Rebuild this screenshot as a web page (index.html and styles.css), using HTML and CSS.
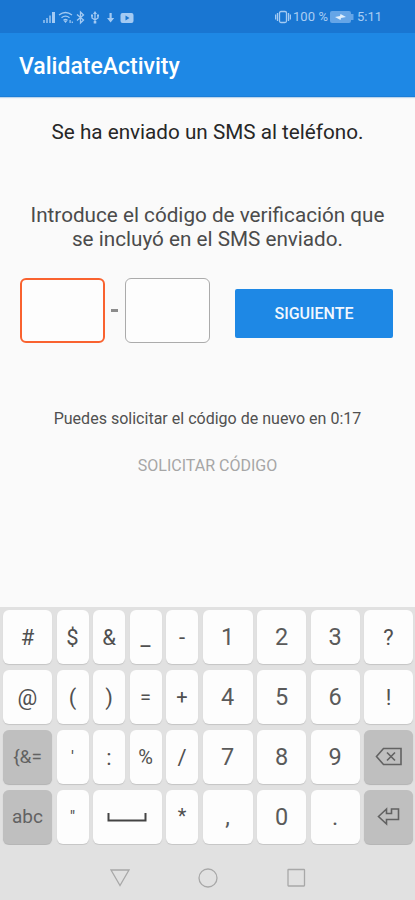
FILE: index.html
```html
<!DOCTYPE html>
<html lang="es">
<head>
<meta charset="utf-8">
<title>ValidateActivity</title>
<link rel="stylesheet" href="styles.css">
</head>
<body>
<div class="phone">
  <div class="status">
    <svg class="status-left" width="94" height="16" viewBox="0 0 94 16">
      <path class="fill dim" d="M0 11h2v3H0zM3 9h2v5H3zM6 6.500h2V14H6z"/>
      <path class="fill" d="M9 3h3v11H9z"/>
      <path class="line" d="M16 6q6.500-5 13 0M18.500 8.700q4-3 8 0M20.500 11.200q2-1.500 4 0"/>
      <path class="fill" d="M20.500 11.500h4L22.500 14zM26.500 11h1.200v3h-1.200zM28.700 12.500h1.200V14h-1.200z"/>
      <path class="line" d="M34 5.500l6.500 5.500-3 3V3l3 3-6.500 5.500"/>
      <path class="line" d="M52 14V4M49 6v3l3 2 3-2V6"/>
      <path class="fill" d="M50 5l2-3 2 3zM48 5.500h2v2h-2zM54 5.500h2v2h-2zM50.700 12h2.600v2.500h-2.600z"/>
      <path class="fill" d="M66.500 4h2.200v5h2.500l-3.600 4.500L64 9h2.500z"/>
      <path class="fill" fill-rule="evenodd" d="M79.500 4h9q2 0 2 2v6q0 2-2 2h-9q-2 0-2-2V6q0-2 2-2zM82.500 6.500v5l4-2.500z"/>
    </svg>
    <div class="status-right">
      <svg width="16" height="14" viewBox="0 0 16 14">
        <rect class="line" x="4.500" y="1.500" width="7" height="11" rx="1.500"/>
        <path class="line" d="M2.500 3v8M13.500 3v8M.6 4.500v5M15.400 4.500v5"/>
      </svg>
      <span class="percent">100 %</span>
      <svg class="battery" width="24" height="12" viewBox="0 0 24 12">
        <rect class="cell" x="0" y="0" width="21" height="12" rx="2"/>
        <path class="cell" d="M21 3h2.500v6H21z"/>
        <path class="bolt" d="M5 6l5-1 .5-2L16 6l-5 1-.5 2z"/>
      </svg>
      <span class="clock">5:11</span>
    </div>
  </div>
  <header class="appbar"><h1>ValidateActivity</h1></header>
  <main>
    <p class="sent">Se ha enviado un SMS al teléfono.</p>
    <p class="intro">Introduce el código de verificación que<br><span>se incluyó en el SMS enviado.</span></p>
    <div class="entry">
      <input class="code active" aria-label="Primera parte">
      <span class="dash"></span>
      <input class="code" aria-label="Segunda parte">
      <button class="next">SIGUIENTE</button>
    </div>
    <p class="wait">Puedes solicitar el código de nuevo en 0:17</p>
    <p class="request">SOLICITAR CÓDIGO</p>
  </main>
  <section class="keyboard">
    <div class="key">#</div><div class="key">$</div><div class="key">&amp;</div><div class="key">_</div><div class="key">-</div><div class="key num">1</div><div class="key num">2</div><div class="key num">3</div><div class="key">?</div>
    <div class="key">@</div><div class="key">(</div><div class="key">)</div><div class="key small">=</div><div class="key small">+</div><div class="key num">4</div><div class="key num">5</div><div class="key num">6</div><div class="key">!</div>
    <div class="key alt sym">{&amp;=</div><div class="key quote">'</div><div class="key">:</div><div class="key small">%</div><div class="key">/</div><div class="key num">7</div><div class="key num">8</div><div class="key num">9</div>
    <div class="key alt"><svg class="glyph" width="28" height="20" viewBox="0 0 28 20"><path d="M1.500 9.500L8.500 1.500H26v16H8.500zM12 5.500l8 8M20 5.500l-8 8"/></svg></div>
    <div class="key alt abc">abc</div><div class="key quote">"</div>
    <div class="key space"><svg class="glyph bar" width="40" height="10" viewBox="0 0 40 10"><path d="M1.500 1v7.500h37V1"/></svg></div>
    <div class="key star">*</div><div class="key num">,</div><div class="key num">0</div><div class="key num">.</div>
    <div class="key alt"><svg class="glyph" width="24" height="20" viewBox="0 0 24 20"><path d="M1.500 9.500L9.500 2v4.500h5V2h7v10.500h-12V17z"/></svg></div>
  </section>
  <nav class="navbar">
    <svg width="20" height="20" viewBox="0 0 20 20"><path d="M1 2h18L10 17.500z"/></svg>
    <svg width="20" height="20" viewBox="0 0 20 20"><circle cx="10" cy="10" r="9"/></svg>
    <svg width="20" height="20" viewBox="0 0 20 20"><rect x="2" y="1.500" width="16.500" height="16.500" rx=".5"/></svg>
  </nav>
</div>
</body>
</html>
```
FILE: styles.css
```css
* { box-sizing: border-box; }
body { margin: 0; font-family: Roboto, "Liberation Sans", sans-serif; }
h1, p { margin: 0; font-weight: 400; }
.phone { width: 415px; height: 900px; display: flex; flex-direction: column; background: #fafafa; overflow: hidden; }
.status { height: 33px; background: #1976d2; display: flex; justify-content: space-between; align-items: center; padding: 0 33px 0 43px; color: #a9cdf3; font-size: 13px; }
.fill { fill: #a3caf3; }
.dim { opacity: .7; }
.line { fill: none; stroke: #a3caf3; stroke-width: 1.3; }
.status-right { display: flex; align-items: center; }
.percent { margin-left: 2px; width: 34px; white-space: nowrap; letter-spacing: .1px; }
.battery { margin: 0 3px 0 3px; }
.cell { fill: #65a5e7; }
.bolt { fill: #e0effd; }
.clock { white-space: nowrap; }
.appbar { height: 64px; background: #1e88e5; border-bottom: 1px solid #1b7ed8; padding: 0 19px; display: flex; align-items: center; box-shadow: 0 1px 1px #bcd5ec; }
.appbar h1 { color: #fff; font-size: 23px; line-height: 26px; font-weight: 500; margin-top: 5px; }
main { height: 510px; display: flex; flex-direction: column; }
.sent { margin-top: 23px; height: 24px; line-height: 24px; font-size: 20.700px; text-align: center; color: #272727; }
.intro { margin-top: 59px; height: 49px; line-height: 24.300px; font-size: 20.700px; text-align: center; color: #4b4b4b; }
.entry { margin: 25px 22px 0 20px; height: 66px; display: flex; align-items: center; }
.code { width: 85px; height: 65px; padding: 0; border: 1.500px solid #ababab; border-radius: 6px; background: #fdfdfd; outline: 0; }
.code.active { border: 2px solid #f9622f; }
.dash { width: 7px; height: 3px; background: #8c8c8c; margin: 1px 7px 0 6px; }
.next { width: 158px; height: 49px; margin: 6px 0 0 auto; padding: 0; border: 0; border-radius: 2px; background: #1e88e5; color: #f1f7fe; font: 500 16px Roboto, sans-serif; }
.wait { margin-top: 66px; height: 20px; line-height: 20px; font-size: 16.050px; text-align: center; color: #505050; }
.request { margin-top: 27px; height: 20px; line-height: 20px; font-size: 16px; text-align: center; color: #a6a6a6; }
.keyboard { height: 238px; background: #e1e1e1; padding: 3px 2px 0 3px; display: grid; grid-template-columns: 49px 32px 32px 32px 32px 50px 49px 49px 49px; grid-template-rows: repeat(4, 54px); column-gap: 4.500px; row-gap: 6px; }
.key { background: #fdfdfd; border-radius: 6px; box-shadow: 0 1px 1px #c5c5c5; display: flex; align-items: center; justify-content: center; color: #505050; font-size: 22px; }
.num { font-size: 23.500px; color: #5a5a5a; }
.small { font-size: 20px; }
.star { font-size: 20px; padding-bottom: 2px; }
.quote { font-size: 17px; padding-bottom: 3px; }
.alt { background: #bfbfbf; color: #626262; box-shadow: 0 1px 1px #b2b2b2; }
.sym { font-size: 19px; padding-bottom: 2px; }
.abc { font-size: 19px; padding-bottom: 2px; }
.space { grid-column: span 2; }
.glyph { fill: none; stroke: #626262; stroke-width: 1.600; }
.bar { stroke: #444; stroke-width: 2; }
.navbar { height: 55px; background: #e1e1e1; padding-top: 11px; display: flex; justify-content: center; align-items: center; gap: 68px; }
.navbar svg { fill: none; stroke: #a8a8a8; stroke-width: 1.300; }
```
